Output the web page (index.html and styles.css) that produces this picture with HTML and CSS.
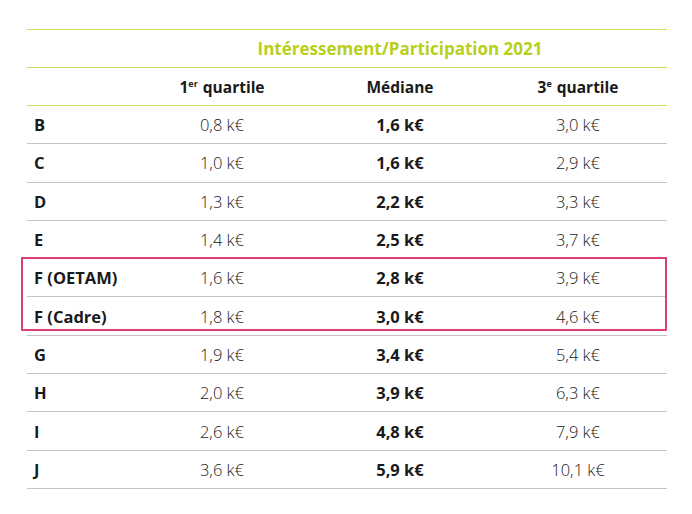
FILE: index.html
```html
<!DOCTYPE html>
<html lang="fr">
<head>
<meta charset="utf-8">
<link rel="stylesheet" href="styles.css">
</head>
<body>
<div class="wrap">
  <table class="grid">
    <colgroup>
      <col class="c-label"><col class="c-val"><col class="c-val"><col class="c-val">
    </colgroup>
    <thead>
      <tr class="title-row"><th></th><th colspan="3" class="title">Intéressement/Participation 2021</th></tr>
      <tr class="head-row"><th></th><th>1<sup>er</sup> quartile</th><th>Médiane</th><th>3<sup>e</sup> quartile</th></tr>
    </thead>
    <tbody>
      <tr><th>B</th><td>0,8 k€</td><td class="med">1,6 k€</td><td>3,0 k€</td></tr>
      <tr><th>C</th><td>1,0 k€</td><td class="med">1,6 k€</td><td>2,9 k€</td></tr>
      <tr><th>D</th><td>1,3 k€</td><td class="med">2,2 k€</td><td>3,3 k€</td></tr>
      <tr><th>E</th><td>1,4 k€</td><td class="med">2,5 k€</td><td>3,7 k€</td></tr>
      <tr><th>F (OETAM)</th><td>1,6 k€</td><td class="med">2,8 k€</td><td>3,9 k€</td></tr>
      <tr><th>F (Cadre)</th><td>1,8 k€</td><td class="med">3,0 k€</td><td>4,6 k€</td></tr>
      <tr><th>G</th><td>1,9 k€</td><td class="med">3,4 k€</td><td>5,4 k€</td></tr>
      <tr><th>H</th><td>2,0 k€</td><td class="med">3,9 k€</td><td>6,3 k€</td></tr>
      <tr><th>I</th><td>2,6 k€</td><td class="med">4,8 k€</td><td>7,9 k€</td></tr>
      <tr><th>J</th><td>3,6 k€</td><td class="med">5,9 k€</td><td>10,1 k€</td></tr>
    </tbody>
  </table>
  <div class="highlight"></div>
</div>
</body>
</html>
```

FILE: styles.css
```css
html, body {
  margin: 0;
  padding: 0;
  background: #ffffff;
}
body {
  font-family: "Open Sans", "Liberation Sans", sans-serif;
  color: #1a1a1a;
}
.wrap {
  position: relative;
  padding: 29px 0 0 27px;
  width: 640px;
}
.grid {
  width: 640px;
  border-collapse: collapse;
  table-layout: fixed;
}
.c-label { width: 106px; }
.c-val { width: 178px; }
.grid th, .grid td {
  padding: 0;
  height: 37.3px;
  font-size: 16.5px;
  border-bottom: 1px solid #c4c4c4;
  vertical-align: middle;
}
.grid thead th {
  height: 37px;
  border-bottom: 1px solid #cfdd62;
  font-weight: 700;
  font-size: 15.5px;
  text-align: center;
}
.title-row th {
  border-top: 1px solid #cfdd62;
}
.grid thead .title {
  color: #b8cf1c;
  font-size: 17px;
}
.head-row th sup {
  font-size: 9px;
  vertical-align: 6px;
  line-height: 0;
  margin-right: 1px;
}
.grid tbody th {
  text-align: left;
  padding-left: 7px;
  font-weight: 700;
}
.grid td {
  text-align: center;
  font-weight: 300;
}
.grid td.med {
  font-weight: 700;
}
.highlight {
  position: absolute;
  left: 21px;
  top: 257px;
  width: 642px;
  height: 70px;
  border: 2px solid #db3f78;
  border-radius: 1px;
  pointer-events: none;
}
```
